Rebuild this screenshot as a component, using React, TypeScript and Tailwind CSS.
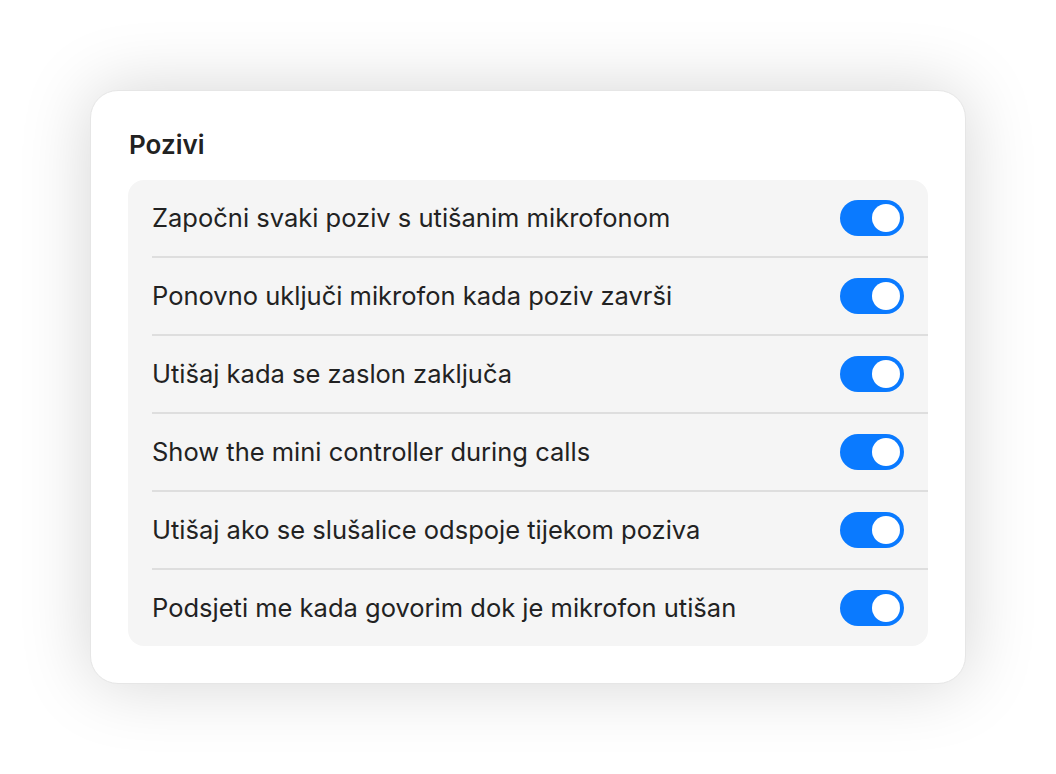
const settings = [
  "Započni svaki poziv s utišanim mikrofonom",
  "Ponovno uključi mikrofon kada poziv završi",
  "Utišaj kada se zaslon zaključa",
  "Show the mini controller during calls",
  "Utišaj ako se slušalice odspoje tijekom poziva",
  "Podsjeti me kada govorim dok je mikrofon utišan",
];

const Toggle = () => (
  <div className="w-16 h-9 rounded-full bg-[#0a7aff] flex items-center justify-end pr-1 shrink-0">
    <div className="w-7 h-7 rounded-full bg-white" />
  </div>
);

export default function App() {
  return (
    <div
      className="w-full h-screen bg-white flex items-center justify-center"
      style={{ fontFamily: "Inter, 'Noto Sans', sans-serif" }}
    >
      <div className="w-[876px] bg-white rounded-[28px] border border-[#e6e6e6] shadow-[0_0_70px_rgba(0,0,0,0.17)] px-[37px] pt-[38px] pb-[37px]">
        <h2 className="text-[26px] leading-[32px] font-semibold text-[#222] pl-px">
          Pozivi
        </h2>
        <div className="mt-[19px] bg-[#f5f5f5] rounded-2xl">
          {settings.map((label, i) => (
            <div key={label}>
              {i > 0 && <div className="ml-6 h-[2px] bg-[#dedede]" />}
              <div className="h-[76px] flex items-center justify-between px-6">
                <span className="text-[25.5px] text-[#222]">{label}</span>
                <Toggle />
              </div>
            </div>
          ))}
        </div>
      </div>
    </div>
  );
}
